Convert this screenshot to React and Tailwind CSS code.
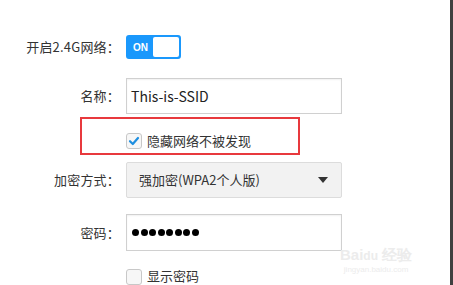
import React from "react";

const font = { fontFamily: '"Noto Sans CJK SC", "Noto Sans", sans-serif' };

function Label({ children }) {
  return (
    <div className="w-[120px] shrink-0 text-right text-[13px] text-[#333] tracking-[0.2px]">
      {children}
    </div>
  );
}

function Check({ checked }) {
  return (
    <div className="w-[16px] h-[16px] rounded-[3px] border border-[#c8c8c8] bg-[#f7f7f7] flex items-center justify-center shrink-0">
      {checked && (
        <svg width="12" height="12" viewBox="0 0 12 12">
          <path d="M2 6.2 L4.8 9 L10 3" fill="none" stroke="#1e8fe0" strokeWidth="2.2" strokeLinecap="round" strokeLinejoin="round" />
        </svg>
      )}
    </div>
  );
}

export default function App() {
  return (
    <div className="w-[453px] h-[285px] bg-white flex overflow-hidden" style={font}>
      <div className="relative flex-1 flex flex-col pt-[35px]">
        {/* Row 1 */}
        <div className="flex items-center h-[24px]">
          <Label>开启2.4G网络：</Label>
          <div className="ml-[6px] w-[55px] h-[24px] rounded-[3px] border-2 border-[#1a98fc] bg-[#1a98fc] flex">
            <div className="w-[25px] flex items-center justify-center text-[10px] font-bold text-white" style={{ fontFamily: '"Liberation Sans", sans-serif' }}>ON</div>
            <div className="flex-1 bg-white rounded-[2px]"></div>
          </div>
        </div>
        {/* Row 2 */}
        <div className="flex items-center h-[36px] mt-[19px]">
          <Label>名称：</Label>
          <div className="ml-[6px] w-[216px] h-[36px] border border-[#d0d0d0] bg-white flex items-center pl-[4px] text-[14px] text-[#222] shadow-[inset_0_1px_2px_rgba(0,0,0,0.06)]">
            This-is-SSID
          </div>
        </div>
        {/* Row 3 */}
        <div className="relative h-[50px] flex items-start pt-[19px]">
          <div className="absolute left-[80px] top-[3px] w-[220px] h-[38px] border-2 border-[#e8393d]"></div>
          <div className="w-[126px] shrink-0"></div>
          <Check checked />
          <span className="ml-[5px] text-[13px] text-[#333] leading-[16px]">隐藏网络不被发现</span>
        </div>
        {/* Row 4 */}
        <div className="flex items-center h-[36px]">
          <Label>加密方式：</Label>
          <div className="ml-[6px] w-[216px] h-[36px] border border-[#dcdcdc] bg-[#f2f2f2] rounded-[2px] flex items-center pl-[12px] pr-[13px] text-[13px] text-[#333]">
            <span className="flex-1">强加密(WPA2个人版)</span>
            <svg width="10" height="6" viewBox="0 0 10 6"><path d="M0 0 L10 0 L5 6 Z" fill="#333" /></svg>
          </div>
        </div>
        {/* Row 5 */}
        <div className="flex items-center h-[37px] mt-[16px]">
          <Label>密码：</Label>
          <div className="ml-[6px] w-[216px] h-[37px] border border-[#d0d0d0] bg-white flex items-center pl-[5px] gap-[1.5px] shadow-[inset_0_1px_2px_rgba(0,0,0,0.06)]">
            {Array.from({ length: 8 }).map((_, i) => (
              <div key={i} className="w-[7px] h-[7px] rounded-full bg-black"></div>
            ))}
          </div>
        </div>
        {/* Row 6 */}
        <div className="flex items-start mt-[18px]">
          <div className="w-[126px] shrink-0"></div>
          <Check />
          <span className="ml-[5px] text-[13px] text-[#333] leading-[16px] mt-[-1px]">显示密码</span>
        </div>
        {/* watermark */}
        <div className="absolute left-[340px] top-[246px] flex flex-col items-center text-[#ececec] pointer-events-none" style={{ fontFamily: '"Liberation Sans", sans-serif' }}>
          <div className="text-[15px] font-bold leading-[18px]">Bai<span className="text-[12px]">du</span> 经验</div>
          <div className="text-[8px] leading-[10px]">jingyan.baidu.com</div>
        </div>
      </div>
      <div className="w-[3px] h-full bg-[#404040]"></div>
    </div>
  );
}
